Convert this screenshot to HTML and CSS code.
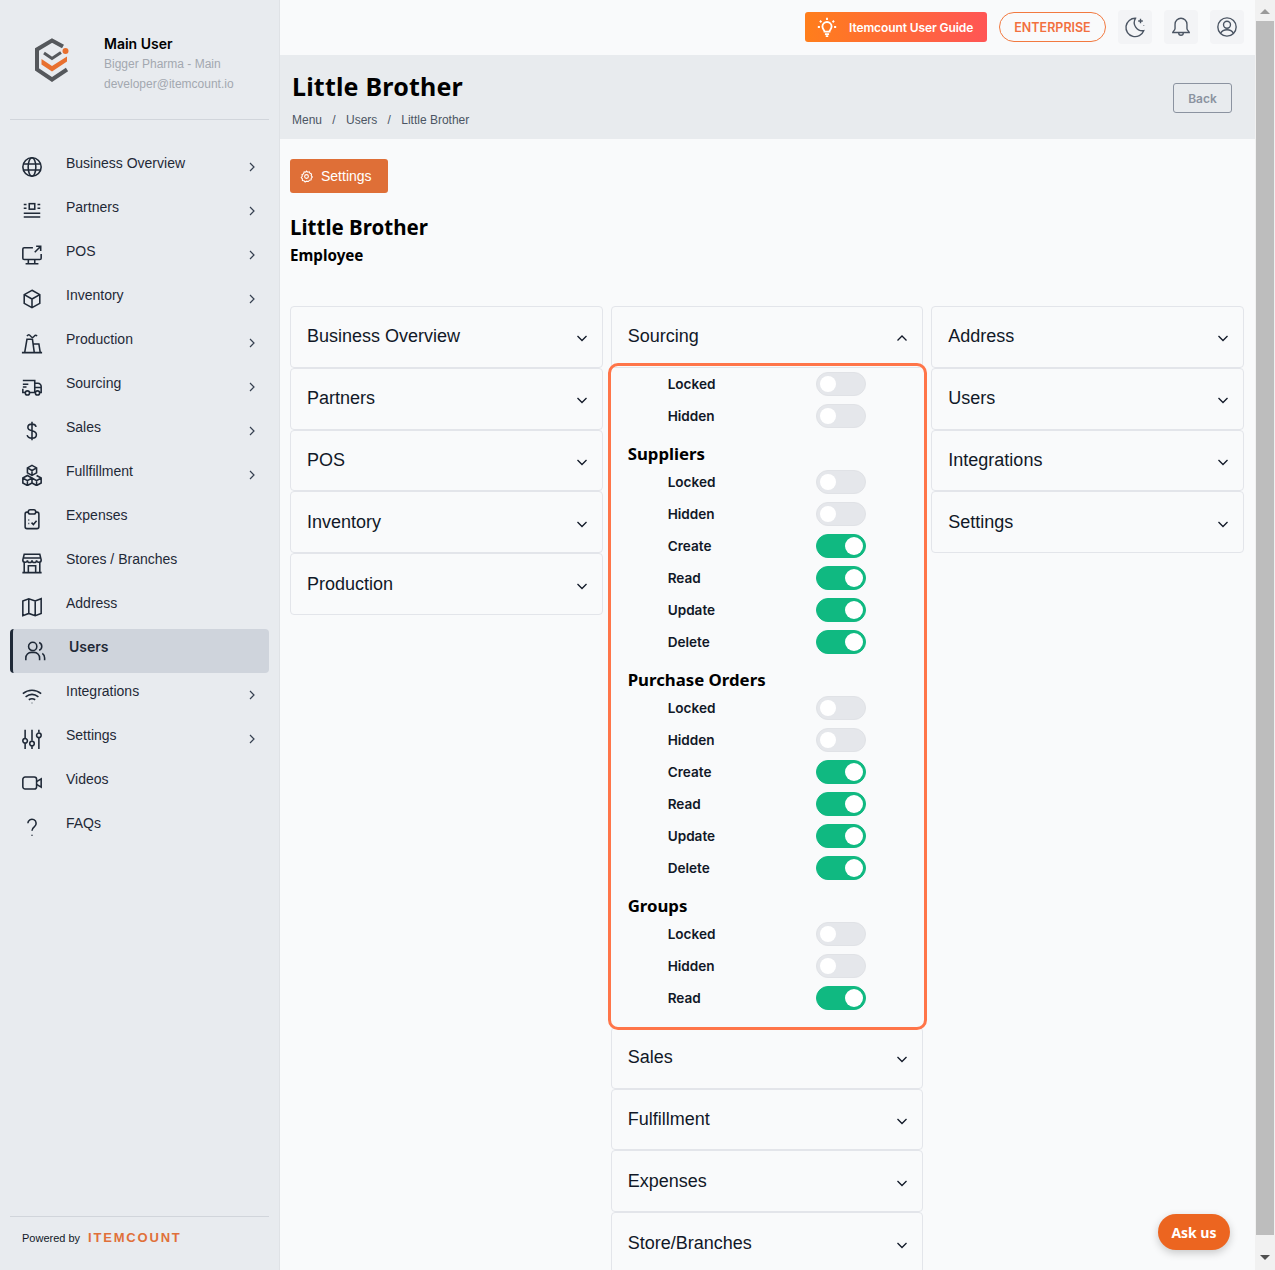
FILE: index.html
```html
<!DOCTYPE html>
<html lang="en">

<head>
    <meta charset="UTF-8">
    <title>Little Brother</title>
    <link rel="stylesheet" href="styles.css">
</head>

<body>
    <div class="app">

        <aside class="sidebar">
            <div class="profile">
                <svg class="logo" viewBox="0 0 38 46" width="38" height="46">
                    <path d="M30 9.500 19 3.500 4 12.500v20L19 42.500l15-10" fill="none" stroke="#55585c" stroke-width="4"/>
                    <path d="M11 16l8 5.500 9-6" fill="none" stroke="#55585c" stroke-width="3"/>
                    <path d="M8.500 22l10.500 7 15-9.500v5L19 34.500l-10.500-7z" fill="#e8702f"/>
                    <circle cx="32.500" cy="14" r="3" fill="#e8702f"/>
                </svg>
                <div class="profile-text">
                    <div class="profile-name">Main User</div>
                    <div class="profile-sub">Bigger Pharma - Main</div>
                    <div class="profile-sub">developer@itemcount.io</div>
                </div>
            </div>

            <nav class="nav">
                <a class="nav-item">
                    <svg class="nav-icon" viewBox="0 0 24 24"><circle cx="12" cy="12" r="10"/><ellipse cx="12" cy="12" rx="4.200" ry="10"/><path d="M2.500 8.800h19M2.500 15.200h19"/></svg>
                    <span class="nav-label">Business Overview</span>
                    <svg class="nav-arrow" viewBox="0 0 8 12"><path d="M2 2l4 4-4 4"/></svg>
                </a>
                <a class="nav-item">
                    <svg class="nav-icon" viewBox="0 0 24 24"><rect x="9" y="4" width="6" height="6"/><path d="M3 5h3M3 9h3M18 5h3M18 9h3M3 14.500h18M3 18.500h18"/></svg>
                    <span class="nav-label">Partners</span>
                    <svg class="nav-arrow" viewBox="0 0 8 12"><path d="M2 2l4 4-4 4"/></svg>
                </a>
                <a class="nav-item">
                    <svg class="nav-icon" viewBox="0 0 24 24"><path d="M13 4H3.500A1.500 1.500 0 0 0 2 5.500v10A1.500 1.500 0 0 0 3.500 17h17a1.500 1.500 0 0 0 1.500-1.500V11M8 17v4M15 17v4M5 21.500h14M15 9l6.500-6.500M16.500 2.500h5v5"/></svg>
                    <span class="nav-label">POS</span>
                    <svg class="nav-arrow" viewBox="0 0 8 12"><path d="M2 2l4 4-4 4"/></svg>
                </a>
                <a class="nav-item">
                    <svg class="nav-icon" viewBox="0 0 24 24"><path d="M12 2.500l8.500 4.800v9.400L12 21.500l-8.500-4.800V7.300zM3.500 7.300L12 12l8.500-4.700M12 12v9.500"/></svg>
                    <span class="nav-label">Inventory</span>
                    <svg class="nav-arrow" viewBox="0 0 8 12"><path d="M2 2l4 4-4 4"/></svg>
                </a>
                <a class="nav-item">
                    <svg class="nav-icon" viewBox="0 0 24 24"><path d="M1 22.500h22M4 22.500L6.500 8h6l2 14.500M13.300 13h6.200l1.500 9.500M6.500 4.500c1.500-2 2.500-2 4 0s2.500 2 4 0c1-1.200 2-1.200 3 0"/></svg>
                    <span class="nav-label">Production</span>
                    <svg class="nav-arrow" viewBox="0 0 8 12"><path d="M2 2l4 4-4 4"/></svg>
                </a>
                <a class="nav-item">
                    <svg class="nav-icon" viewBox="0 0 24 24"><path d="M2 5h13v13H9.500M4.500 18H2v-4M2 9h6M2 12h4M15 8h3.500a3.500 3.500 0 0 1 3.500 3.500V18h-1.500M15 18h.8M15 12.500h7"/><circle cx="7" cy="18.500" r="2.300"/><circle cx="18" cy="18.500" r="2.300"/></svg>
                    <span class="nav-label">Sourcing</span>
                    <svg class="nav-arrow" viewBox="0 0 8 12"><path d="M2 2l4 4-4 4"/></svg>
                </a>
                <a class="nav-item">
                    <svg class="nav-icon" viewBox="0 0 24 24"><path d="M16.500 7.500C16 5.500 14.300 4.500 12 4.500 9.300 4.500 7.500 5.800 7.500 8s1.800 3.200 4.500 3.800 4.800 1.700 4.800 4.200-2.100 3.800-4.800 3.800-4.800-1.100-5.300-3.300M12 2v20"/></svg>
                    <span class="nav-label">Sales</span>
                    <svg class="nav-arrow" viewBox="0 0 8 12"><path d="M2 2l4 4-4 4"/></svg>
                </a>
                <a class="nav-item">
                    <svg class="nav-icon" viewBox="0 0 24 24"><path d="M12 1.500l5 2.800v5.400L12 12.500 7 9.700V4.300zM7 4.300l5 2.800 5-2.800M12 7.100v5.400M7 12.500l5 2.800v5.400l-5 2.800-5-2.800v-5.400zM2 15.300l5 2.800 5-2.800M7 18.100v5.400M17 12.500l5 2.800v5.400l-5 2.800-5-2.800M12 15.300l5 2.800 5-2.800M17 18.100v5.400"/></svg>
                    <span class="nav-label">Fullfillment</span>
                    <svg class="nav-arrow" viewBox="0 0 8 12"><path d="M2 2l4 4-4 4"/></svg>
                </a>
                <a class="nav-item">
                    <svg class="nav-icon" viewBox="0 0 24 24"><path d="M8 4.500H6.500A2 2 0 0 0 4.500 6.500v14a2 2 0 0 0 2 2h11a2 2 0 0 0 2-2v-14a2 2 0 0 0-2-2H16"/><rect x="8" y="2" width="8" height="4.500" rx="2"/><path d="M8 13h1M8 17h1M11.500 16l2 2 3.500-4"/></svg>
                    <span class="nav-label">Expenses</span>
                </a>
                <a class="nav-item">
                    <svg class="nav-icon" viewBox="0 0 24 24"><path d="M3.500 2.500h17l1.500 6a2.500 2.500 0 0 1-5 .5 2.500 2.500 0 0 1-5 0 2.500 2.500 0 0 1-5 0 2.500 2.500 0 0 1-5-.5zM2.500 6.500h19M3.500 11.500v11M20.500 11.500v11M1.500 22.500h21M8 22.500V15h8v7.500"/></svg>
                    <span class="nav-label">Stores / Branches</span>
                </a>
                <a class="nav-item">
                    <svg class="nav-icon" viewBox="0 0 24 24"><path d="M2 5.500l6.500-2.500 7 2.500 6.500-2.500v16l-6.500 2.500-7-2.500L2 21.500zM8.500 3v16M15.500 5.500v16"/></svg>
                    <span class="nav-label">Address</span>
                </a>
                <a class="nav-item nav-active">
                    <svg class="nav-icon" viewBox="0 0 24 24"><circle cx="9.500" cy="7" r="4.500"/><path d="M2 22v-2.500A6 6 0 0 1 8 13.500h3a6 6 0 0 1 6 6V22M16.500 2.800a4.500 4.500 0 0 1 0 8.400M20 14.500a6 6 0 0 1 2.500 5V22"/></svg>
                    <span class="nav-label">Users</span>
                </a>
                <a class="nav-item">
                    <svg class="nav-icon" viewBox="0 0 24 24"><path d="M2 10.500c6-5 14-5 20 0M5 14c4.500-3.500 9.500-3.500 14 0M8.500 17.200c2.300-1.500 4.700-1.500 7 0M12 20.500v.5"/></svg>
                    <span class="nav-label">Integrations</span>
                    <svg class="nav-arrow" viewBox="0 0 8 12"><path d="M2 2l4 4-4 4"/></svg>
                </a>
                <a class="nav-item">
                    <svg class="nav-icon" viewBox="0 0 24 24"><path d="M4.500 2v9M4.500 17v6M12 2v12M12 20v3M19.500 2v3M19.500 11v12"/><circle cx="4.500" cy="14" r="2.500"/><circle cx="12" cy="17" r="2.500"/><circle cx="19.500" cy="8" r="2.500"/></svg>
                    <span class="nav-label">Settings</span>
                    <svg class="nav-arrow" viewBox="0 0 8 12"><path d="M2 2l4 4-4 4"/></svg>
                </a>
                <a class="nav-item">
                    <svg class="nav-icon" viewBox="0 0 24 24"><rect x="2" y="5.500" width="15" height="13" rx="2.500"/><path d="M17 10.500l5-3v9l-5-3"/></svg>
                    <span class="nav-label">Videos</span>
                </a>
                <a class="nav-item">
                    <svg class="nav-icon" viewBox="0 0 24 24"><path d="M7.500 8a4.500 4.500 0 1 1 7.200 3.600c-1.700 1.300-2.700 2.300-2.700 4.400M12 20.500v1"/></svg>
                    <span class="nav-label">FAQs</span>
                </a>
            </nav>

            <div class="powered">
                <span class="powered-by">Powered by</span>
                <span class="powered-brand">ITEMCOUNT</span>
            </div>
        </aside>

        <main class="main">
            <div class="topbar">
                <a class="guide-btn">
                    <svg class="guide-icon" viewBox="0 0 24 24"><path d="M12 1v2.500M3.500 4.500l1.800 1.800M20.500 4.500l-1.800 1.800M1 12h2.500M20.500 12H23M9.500 20.500h5M10.500 23h3M9 17.500c0-1.800-2.500-3-2.500-6a5.500 5.500 0 0 1 11 0c0 3-2.500 4.200-2.500 6z"/></svg>
                    Itemcount User Guide
                </a>
                <a class="plan-btn">ENTERPRISE</a>
                <a class="icon-btn">
                    <svg viewBox="0 0 24 24"><path d="M12.500 2.500a10 10 0 1 0 9 13.500 9 9 0 0 1-9-13.500zM18 3v5M15.500 5.500h5M21.500 10v.5"/></svg>
                </a>
                <a class="icon-btn">
                    <svg viewBox="0 0 24 24"><path d="M12 2.500a6.500 6.500 0 0 0-6.500 6.500v4.500c0 2-2.500 3.500-2.500 4.500h18c0-1-2.500-2.500-2.500-4.500V9A6.500 6.500 0 0 0 12 2.500zM9.500 18.500a2.500 2.500 0 0 0 5 0"/></svg>
                </a>
                <a class="icon-btn">
                    <svg viewBox="0 0 24 24"><circle cx="12" cy="12" r="10"/><circle cx="12" cy="9.500" r="3.800"/><path d="M5 19c1.500-3 4-4 7-4s5.500 1 7 4"/></svg>
                </a>
            </div>

            <div class="page-head">
                <div>
                    <h1 class="page-title">Little Brother</h1>
                    <div class="crumbs">
                        <span>Menu</span><span class="crumb-sep">/</span><span>Users</span><span class="crumb-sep">/</span><span>Little Brother</span>
                    </div>
                </div>
                <a class="back-btn">Back</a>
            </div>

            <div class="content">
                <a class="settings-btn">
                    <svg viewBox="0 0 24 24"><circle cx="12" cy="12" r="3.500"/><path d="M12 2l2.300 2 3-.6 1.200 2.800 2.800 1.300-.6 3 2 2.500-2 2.300-.2 3-3 .6-2 2.300L12 20.500l-2.500 1.700-2-2.300-3-.6-.2-3-2-2.300 2-2.500-.6-3 2.800-1.300L7.700 3.400l3 .6z"/></svg>
                    Settings
                </a>
                <h2 class="user-name">Little Brother</h2>
                <div class="user-role">Employee</div>

                <div class="columns">
                    <div class="column">
                        <div class="acc-item"><span>Business Overview</span><svg class="acc-arrow" viewBox="0 0 12 8"><path d="M1.500 2L6 6.500 10.500 2"/></svg></div>
                        <div class="acc-item"><span>Partners</span><svg class="acc-arrow" viewBox="0 0 12 8"><path d="M1.500 2L6 6.500 10.500 2"/></svg></div>
                        <div class="acc-item"><span>POS</span><svg class="acc-arrow" viewBox="0 0 12 8"><path d="M1.500 2L6 6.500 10.500 2"/></svg></div>
                        <div class="acc-item"><span>Inventory</span><svg class="acc-arrow" viewBox="0 0 12 8"><path d="M1.500 2L6 6.500 10.500 2"/></svg></div>
                        <div class="acc-item"><span>Production</span><svg class="acc-arrow" viewBox="0 0 12 8"><path d="M1.500 2L6 6.500 10.500 2"/></svg></div>
                    </div>

                    <div class="column">
                        <div class="acc-item"><span>Sourcing</span><svg class="acc-arrow" viewBox="0 0 12 8"><path d="M1.500 6.500L6 2l4.500 4.500"/></svg></div>
                        <div class="acc-panel">
                            <div class="perm-row"><span>Locked</span><span class="toggle"></span></div>
                            <div class="perm-row"><span>Hidden</span><span class="toggle"></span></div>

                            <h3 class="perm-group">Suppliers</h3>
                            <div class="perm-row"><span>Locked</span><span class="toggle"></span></div>
                            <div class="perm-row"><span>Hidden</span><span class="toggle"></span></div>
                            <div class="perm-row"><span>Create</span><span class="toggle toggle-on"></span></div>
                            <div class="perm-row"><span>Read</span><span class="toggle toggle-on"></span></div>
                            <div class="perm-row"><span>Update</span><span class="toggle toggle-on"></span></div>
                            <div class="perm-row"><span>Delete</span><span class="toggle toggle-on"></span></div>

                            <h3 class="perm-group">Purchase Orders</h3>
                            <div class="perm-row"><span>Locked</span><span class="toggle"></span></div>
                            <div class="perm-row"><span>Hidden</span><span class="toggle"></span></div>
                            <div class="perm-row"><span>Create</span><span class="toggle toggle-on"></span></div>
                            <div class="perm-row"><span>Read</span><span class="toggle toggle-on"></span></div>
                            <div class="perm-row"><span>Update</span><span class="toggle toggle-on"></span></div>
                            <div class="perm-row"><span>Delete</span><span class="toggle toggle-on"></span></div>

                            <h3 class="perm-group">Groups</h3>
                            <div class="perm-row"><span>Locked</span><span class="toggle"></span></div>
                            <div class="perm-row"><span>Hidden</span><span class="toggle"></span></div>
                            <div class="perm-row"><span>Read</span><span class="toggle toggle-on"></span></div>
                        </div>
                        <div class="acc-item"><span>Sales</span><svg class="acc-arrow" viewBox="0 0 12 8"><path d="M1.500 2L6 6.500 10.500 2"/></svg></div>
                        <div class="acc-item"><span>Fulfillment</span><svg class="acc-arrow" viewBox="0 0 12 8"><path d="M1.500 2L6 6.500 10.500 2"/></svg></div>
                        <div class="acc-item"><span>Expenses</span><svg class="acc-arrow" viewBox="0 0 12 8"><path d="M1.500 2L6 6.500 10.500 2"/></svg></div>
                        <div class="acc-item"><span>Store/Branches</span><svg class="acc-arrow" viewBox="0 0 12 8"><path d="M1.500 2L6 6.500 10.500 2"/></svg></div>
                    </div>

                    <div class="column">
                        <div class="acc-item"><span>Address</span><svg class="acc-arrow" viewBox="0 0 12 8"><path d="M1.500 2L6 6.500 10.500 2"/></svg></div>
                        <div class="acc-item"><span>Users</span><svg class="acc-arrow" viewBox="0 0 12 8"><path d="M1.500 2L6 6.500 10.500 2"/></svg></div>
                        <div class="acc-item"><span>Integrations</span><svg class="acc-arrow" viewBox="0 0 12 8"><path d="M1.500 2L6 6.500 10.500 2"/></svg></div>
                        <div class="acc-item"><span>Settings</span><svg class="acc-arrow" viewBox="0 0 12 8"><path d="M1.500 2L6 6.500 10.500 2"/></svg></div>
                    </div>
                </div>
            </div>

            <a class="ask-btn">Ask us</a>
        </main>

        <div class="scrollbar">
            <span class="scroll-up"></span>
            <div class="scroll-thumb"></div>
            <span class="scroll-down"></span>
        </div>
    </div>
</body>

</html>
```

FILE: styles.css
```css
* {
    box-sizing: border-box;
}

body {
    margin: 0;
    font-family: "Liberation Sans", Arial, sans-serif;
    background-color: #f9fafb;
    color: #111827;
}

.app {
    display: flex;
    width: 1275px;
    height: 1270px;
    overflow: hidden;
}

/* sidebar */
.sidebar {
    width: 280px;
    flex-shrink: 0;
    display: flex;
    flex-direction: column;
    padding: 0 10px;
    background-color: #e8ebef;
    border-right: 1px solid #dfe2e6;
}

.profile {
    height: 120px;
    display: flex;
    padding: 34px 0 0 23px;
    border-bottom: 1px solid #d1d5db;
}

.logo {
    margin-top: 3px;
    flex-shrink: 0;
}

.profile-text {
    margin-left: 33px;
}

.profile-name {
    font-family: Inter, sans-serif;
    font-size: 14px;
    font-weight: 600;
    line-height: 20px;
    color: #000;
}

.profile-sub {
    font-size: 12px;
    line-height: 20px;
    color: #a3a8b0;
}

.nav {
    flex: 1;
    padding-top: 25px;
}

.nav-item {
    height: 44px;
    display: flex;
    align-items: flex-start;
    color: #1f2937;
}

.nav-icon {
    width: 22px;
    height: 22px;
    margin: 11px 0 0 11px;
    flex-shrink: 0;
    fill: none;
    stroke: #1f2937;
    stroke-width: 1.700;
}

.nav-label {
    margin-left: 23px;
    font-size: 14px;
    line-height: 36px;
}

.nav-arrow {
    width: 8px;
    height: 12px;
    margin: 16px 13px 0 auto;
    fill: none;
    stroke: #374151;
    stroke-width: 1.200;
}

.nav-active {
    background-color: #cfd4dc;
    border-left: 3px solid #1f2937;
    border-radius: 4px;
}

.nav-active .nav-label {
    font-family: Inter, sans-serif;
    font-weight: 600;
}

.powered {
    height: 54px;
    display: flex;
    align-items: center;
    gap: 8px;
    padding: 0 0 12px 12px;
    border-top: 1px solid #d1d5db;
}

.powered-by {
    font-size: 11px;
    color: #111827;
}

.powered-brand {
    font-size: 13px;
    font-weight: 700;
    letter-spacing: 1.800px;
    color: #e0703a;
}

/* main area */
.main {
    flex: 1;
    min-width: 0;
    position: relative;
}

.topbar {
    height: 55px;
    display: flex;
    align-items: center;
    justify-content: flex-end;
    gap: 12px;
    padding: 0 11px 1px 0;
}

.guide-btn {
    width: 182px;
    height: 30px;
    display: flex;
    align-items: center;
    gap: 12px;
    padding-left: 12px;
    border-radius: 3px;
    background: linear-gradient(90deg, #ff7e1b, #ff5555);
    font-family: Inter, sans-serif;
    font-size: 12px;
    font-weight: 600;
    letter-spacing: -0.1px;
    color: #fff;
}

.guide-icon {
    width: 20px;
    height: 20px;
    fill: none;
    stroke: #fff;
    stroke-width: 2.200;
}

.plan-btn {
    width: 107px;
    height: 30px;
    display: flex;
    align-items: center;
    justify-content: center;
    border: 1px solid #f2793f;
    border-radius: 15px;
    font-family: Inter, sans-serif;
    font-size: 12.500px;
    font-weight: 600;
    color: #f2703f;
}

.icon-btn {
    width: 34px;
    height: 34px;
    display: flex;
    align-items: center;
    justify-content: center;
    border-radius: 4px;
    background-color: #f3f4f6;
}

.icon-btn svg {
    width: 22px;
    height: 22px;
    fill: none;
    stroke: #4b5563;
    stroke-width: 1.500;
}

.page-head {
    height: 84px;
    display: flex;
    justify-content: space-between;
    padding: 14px 23px 0 12px;
    background-color: #e8ebee;
}

.page-title {
    margin: 0;
    font-family: "Noto Sans", sans-serif;
    font-size: 25px;
    font-weight: 700;
    letter-spacing: 0.2px;
    line-height: 34px;
    color: #000;
}

.crumbs {
    margin-top: 9px;
    font-size: 12px;
    line-height: 16px;
    color: #4b5563;
}

.crumb-sep {
    margin: 0 10.300px;
}

.back-btn {
    width: 59px;
    height: 30px;
    margin-top: 14px;
    display: flex;
    align-items: center;
    justify-content: center;
    border: 1px solid #8b93a0;
    border-radius: 3px;
    font-family: Inter, sans-serif;
    font-size: 12px;
    font-weight: 600;
    color: #8b93a0;
}

.content {
    padding: 20px 11px 0 10px;
}

.settings-btn {
    width: 98px;
    height: 34px;
    display: flex;
    align-items: center;
    gap: 8px;
    padding-left: 10px;
    border-radius: 3px;
    background-color: #df6f37;
    font-size: 14px;
    color: #fff;
}

.settings-btn svg {
    width: 13px;
    height: 13px;
    fill: none;
    stroke: #fff;
    stroke-width: 2;
}

.user-name {
    margin: 18px 0 0;
    font-family: "Noto Sans", sans-serif;
    font-size: 20.500px;
    font-weight: 700;
    line-height: 32px;
    color: #000;
}

.user-role {
    margin-top: 1px;
    font-family: "Noto Sans", sans-serif;
    font-size: 15.200px;
    font-weight: 700;
    line-height: 22px;
    color: #000;
}

/* permission accordions */
.columns {
    display: grid;
    grid-template-columns: repeat(3, 1fr);
    gap: 8px;
    align-items: start;
    margin-top: 40px;
}

.acc-item {
    height: 61.800px;
    display: flex;
    align-items: center;
    justify-content: space-between;
    padding: 0 14px 0 16px;
    border: 1px solid #e3e5ea;
    border-radius: 4px;
    font-size: 18px;
    color: #111827;
}

.acc-arrow {
    width: 12px;
    height: 8px;
    margin-top: 3px;
    fill: none;
    stroke: #111827;
    stroke-width: 1.300;
}

.acc-panel {
    position: relative;
    margin: -5px -4px -3px -3px;
    padding: 2px 0 13px 0;
    border: 3px solid #ff7549;
    border-radius: 10px;
}

.perm-row {
    height: 32px;
    display: flex;
    align-items: center;
    padding-left: 57px;
    font-family: Inter, sans-serif;
    font-size: 13.600px;
    font-weight: 600;
    color: #111827;
}

.perm-row span:first-child {
    width: 148px;
}

.perm-group {
    margin: 11px 0 1px;
    padding-left: 17px;
    font-family: "Noto Sans", sans-serif;
    font-size: 16.800px;
    font-weight: 700;
    line-height: 22px;
    color: #000;
}

.toggle {
    width: 50px;
    height: 24px;
    position: relative;
    border: 1px solid #e0e2e6;
    border-radius: 12px;
    background-color: #e5e7eb;
}

.toggle::after {
    content: "";
    position: absolute;
    left: 3px;
    top: 3px;
    width: 16px;
    height: 16px;
    border-radius: 50%;
    background-color: #fff;
}

.toggle-on {
    border-color: #10b981;
    background-color: #10b981;
}

.toggle-on::after {
    left: 28px;
    top: 2px;
    width: 18px;
    height: 18px;
}

.ask-btn {
    position: absolute;
    right: 25px;
    top: 1214px;
    width: 72px;
    height: 36px;
    display: flex;
    align-items: center;
    justify-content: center;
    border-radius: 18px;
    background-color: #ec6520;
    box-shadow: 0 3px 8px rgba(0, 0, 0, 0.2);
    font-family: "Open Sans", sans-serif;
    font-size: 14px;
    font-weight: 700;
    color: #fff;
}

/* page scrollbar */
.scrollbar {
    width: 20px;
    flex-shrink: 0;
    display: flex;
    flex-direction: column;
    align-items: center;
    background-color: #f1f1f1;
}

.scroll-thumb {
    width: 18px;
    height: 1214px;
    margin-top: 7px;
    background-color: #bdbdbd;
}

.scroll-up,
.scroll-down {
    border-left: 5px solid transparent;
    border-right: 5px solid transparent;
}

.scroll-up {
    margin-top: 9px;
    border-bottom: 5px solid #9a9a9a;
}

.scroll-down {
    margin-top: 20px;
    border-top: 5px solid #505050;
}
```
